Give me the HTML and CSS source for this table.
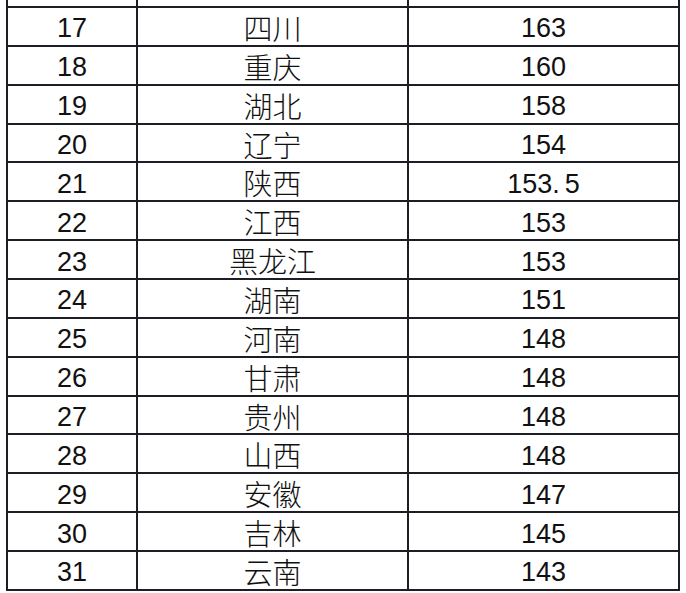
FILE: index.html
```html
<!DOCTYPE html>
<html lang="zh-CN">
<head>
<meta charset="utf-8">
<title>排名表</title>
<link rel="stylesheet" href="styles.css">
</head>
<body>
<table class="rank">
<colgroup><col class="c1"><col class="c2"><col class="c3"></colgroup>
<tbody>
<tr class="stub"><td></td><td></td><td></td></tr>
<tr><td>17</td><td class="zh">四川</td><td>163</td></tr>
<tr><td>18</td><td class="zh">重庆</td><td>160</td></tr>
<tr><td>19</td><td class="zh">湖北</td><td>158</td></tr>
<tr><td>20</td><td class="zh">辽宁</td><td>154</td></tr>
<tr><td>21</td><td class="zh">陕西</td><td>153<span class="dot">.</span>5</td></tr>
<tr><td>22</td><td class="zh">江西</td><td>153</td></tr>
<tr><td>23</td><td class="zh">黑龙江</td><td>153</td></tr>
<tr><td>24</td><td class="zh">湖南</td><td>151</td></tr>
<tr><td>25</td><td class="zh">河南</td><td>148</td></tr>
<tr><td>26</td><td class="zh">甘肃</td><td>148</td></tr>
<tr><td>27</td><td class="zh">贵州</td><td>148</td></tr>
<tr><td>28</td><td class="zh">山西</td><td>148</td></tr>
<tr><td>29</td><td class="zh">安徽</td><td>147</td></tr>
<tr><td>30</td><td class="zh">吉林</td><td>145</td></tr>
<tr><td>31</td><td class="zh">云南</td><td>143</td></tr>
</tbody>
</table>
</body>
</html>
```
FILE: styles.css
```css
html, body {
  margin: 0;
  padding: 0;
  background: #ffffff;
}
body {
  padding: 0 0 0 6px;
}
.rank {
  border-collapse: collapse;
  table-layout: fixed;
  width: 672px;
  font-family: "Liberation Sans", Arial, "Noto Sans CJK SC", sans-serif;
  font-size: 27px;
  color: #111111;
}
.c1 { width: 130px; }
.c2 { width: 271px; }
.c3 { width: 271px; }
.rank td {
  border: 2px solid #1d1d26;
  height: 38.87px;
  padding: 4px 0 0 0;
  text-align: center;
  vertical-align: middle;
  line-height: 30px;
  box-sizing: border-box;
}
.rank tr.stub td {
  height: 7px;
  border-top: none;
  padding: 0;
  line-height: 0;
}
.rank td.zh {
  font-family: "Noto Sans CJK SC", sans-serif;
  font-size: 29px;
  font-weight: 300;
  padding-top: 1px;
}
.dot {
  margin-right: 5px;
}
```
